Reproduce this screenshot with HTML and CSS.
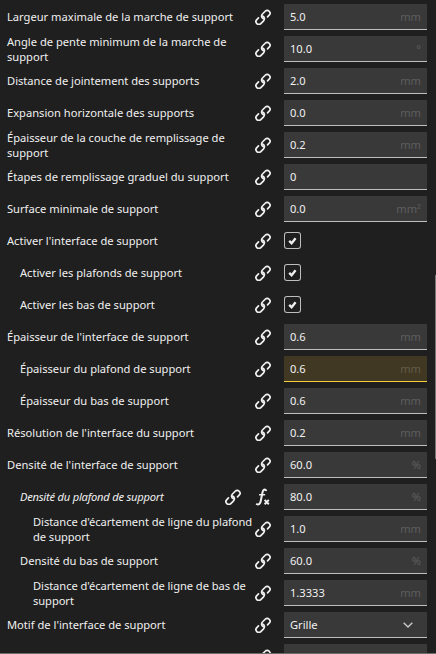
FILE: index.html
```
<!DOCTYPE html>
<html lang="fr">
<head>
<meta charset="utf-8">
<title>Support</title>
<link rel="stylesheet" href="styles.css">
</head>
<body>
<svg class="defs" aria-hidden="true">
  <symbol id="link" viewBox="-8 -8.400 16 16">
    <g fill="none" stroke="currentColor" stroke-width="1.700" stroke-linecap="round" transform="rotate(-45)">
      <path d="M3.600 2.800H5.900A2.800 2.800 0 0 0 5.900 -2.800H2A2.800 2.800 0 0 0 -.6 1.200"/>
      <path d="M-3.600 -2.800H-5.900A2.800 2.800 0 0 0 -5.900 2.800H-2A2.800 2.800 0 0 0 .6 -1.200"/>
    </g>
  </symbol>
  <symbol id="fx" viewBox="0 0 16 18">
    <g fill="none" stroke="currentColor" stroke-linecap="round">
      <path stroke-width="2" d="M11 2.200C9 .8 7.900 2.200 7.400 4.700L5.700 13.200C5.200 15.600 3.700 17.200 1.800 16.200"/>
      <path stroke-width="1.400" d="M4.600 6.800H9.600"/>
      <path stroke-width="2" stroke-linecap="butt" d="M9.600 11.900L13.800 16.300M13.800 11.900L9.600 16.300"/>
    </g>
  </symbol>
  <symbol id="check" viewBox="0 0 17 17">
    <path fill="none" stroke="currentColor" stroke-width="2.300" d="M5.200 8.900L7.600 11.200L11.600 6.200"/>
  </symbol>
  <symbol id="chevron" viewBox="0 0 10 6">
    <path fill="none" stroke="currentColor" stroke-width="1.400" d="M.7.700L5 5L9.300.7"/>
  </symbol>
</svg>
<main class="settings">
  <div class="row"><span class="label">Largeur maximale de la marche de support</span><svg class="icon"><use href="#link"/></svg><div class="field"><span>5.0</span><span class="unit">mm</span></div></div>
  <div class="row"><span class="label">Angle de pente minimum de la marche de support</span><svg class="icon"><use href="#link"/></svg><div class="field"><span>10.0</span><span class="unit">°</span></div></div>
  <div class="row"><span class="label">Distance de jointement des supports</span><svg class="icon"><use href="#link"/></svg><div class="field"><span>2.0</span><span class="unit">mm</span></div></div>
  <div class="row"><span class="label">Expansion horizontale des supports</span><svg class="icon"><use href="#link"/></svg><div class="field"><span>0.0</span><span class="unit">mm</span></div></div>
  <div class="row"><span class="label">Épaisseur de la couche de remplissage de support</span><svg class="icon"><use href="#link"/></svg><div class="field"><span>0.2</span><span class="unit">mm</span></div></div>
  <div class="row"><span class="label">Étapes de remplissage graduel du support</span><svg class="icon"><use href="#link"/></svg><div class="field"><span>0</span></div></div>
  <div class="row"><span class="label">Surface minimale de support</span><svg class="icon"><use href="#link"/></svg><div class="field"><span>0.0</span><span class="unit">mm²</span></div></div>
  <div class="row"><span class="label">Activer l'interface de support</span><svg class="icon"><use href="#link"/></svg><svg class="checkbox"><use href="#check"/></svg></div>
  <div class="row level-1"><span class="label">Activer les plafonds de support</span><svg class="icon"><use href="#link"/></svg><svg class="checkbox"><use href="#check"/></svg></div>
  <div class="row level-1"><span class="label">Activer les bas de support</span><svg class="icon"><use href="#link"/></svg><svg class="checkbox"><use href="#check"/></svg></div>
  <div class="row"><span class="label">Épaisseur de l'interface de support</span><svg class="icon"><use href="#link"/></svg><div class="field"><span>0.6</span><span class="unit">mm</span></div></div>
  <div class="row level-1"><span class="label">Épaisseur du plafond de support</span><svg class="icon"><use href="#link"/></svg><div class="field warning"><span>0.6</span><span class="unit">mm</span></div></div>
  <div class="row level-1"><span class="label">Épaisseur du bas de support</span><svg class="icon"><use href="#link"/></svg><div class="field"><span>0.6</span><span class="unit">mm</span></div></div>
  <div class="row"><span class="label">Résolution de l'interface du support</span><svg class="icon"><use href="#link"/></svg><div class="field"><span>0.2</span><span class="unit">mm</span></div></div>
  <div class="row"><span class="label">Densité de l'interface de support</span><svg class="icon"><use href="#link"/></svg><div class="field"><span>60.0</span><span class="unit">%</span></div></div>
  <div class="row level-1"><span class="label changed">Densité du plafond de support</span><svg class="icon"><use href="#link"/></svg><svg class="icon fx"><use href="#fx"/></svg><div class="field"><span>80.0</span><span class="unit">%</span></div></div>
  <div class="row level-2"><span class="label">Distance d'écartement de ligne du plafond de support</span><svg class="icon"><use href="#link"/></svg><div class="field"><span>1.0</span><span class="unit">mm</span></div></div>
  <div class="row level-1"><span class="label">Densité du bas de support</span><svg class="icon"><use href="#link"/></svg><div class="field"><span>60.0</span><span class="unit">%</span></div></div>
  <div class="row level-2"><span class="label">Distance d'écartement de ligne de bas de support</span><svg class="icon"><use href="#link"/></svg><div class="field"><span>1.3333</span><span class="unit">mm</span></div></div>
  <div class="row"><span class="label">Motif de l'interface de support</span><svg class="icon"><use href="#link"/></svg><div class="field"><span>Grille</span><svg class="chevron"><use href="#chevron"/></svg></div></div>
  <div class="row"><span class="label"></span><svg class="icon"><use href="#link"/></svg><div class="field"></div></div>
</main>
<div class="scrollbar"></div>
</body>
</html>
```
FILE: styles.css
```
* {
  box-sizing: border-box;
}

body {
  margin: 0;
  background: #1f1f1f;
  color: #f0f0f0;
  font: 11.15px/15px "Noto Sans", sans-serif;
}

.defs {
  position: absolute;
  width: 0;
  height: 0;
}

.settings {
  height: 654px;
  padding-top: 1px;
  overflow: hidden;
  border-bottom: 1px solid #6e6a6e;
}

.row {
  display: flex;
  align-items: center;
  height: 32px;
  padding: 0 9px 0 7px;
}

.level-1 {
  padding-left: 20px;
}

.level-2 {
  padding-left: 33px;
}

.label {
  flex: 1;
  margin-right: -2px;
  padding-bottom: 1px;
}

.level-2 .label {
  letter-spacing: -0.06px;
}

.changed {
  font-style: italic;
  letter-spacing: -0.22px;
}

.icon {
  flex: none;
  width: 16px;
  height: 16px;
  margin-right: 13px;
  overflow: visible;
  color: #f0f0f0;
}

.icon + .icon {
  margin-left: 1px;
}

.icon.fx {
  height: 18px;
}

.field,
.checkbox {
  flex: none;
}

.field {
  display: flex;
  align-items: center;
  justify-content: space-between;
  width: 143px;
  height: 26px;
  padding: 0 6px;
  background: #393939;
  border-bottom: 1px solid #bebebe;
}

.warning {
  background: #403823;
  border-color: #f5cf3c;
}

.unit {
  color: #5e5e5e;
}

.warning .unit {
  color: #625b49;
}

.checkbox {
  width: 17px;
  height: 17px;
  margin: 0 126px 1px 0;
  border-radius: 3px;
  box-shadow: inset 0 0 0 1px #bebebe;
}

.chevron {
  width: 10px;
  height: 6px;
  margin: 1px 8px 0 0;
  color: #c8c8c8;
}

.scrollbar {
  position: absolute;
  top: 275px;
  right: 0;
  width: 1px;
  height: 184px;
  background: #777;
}
```
